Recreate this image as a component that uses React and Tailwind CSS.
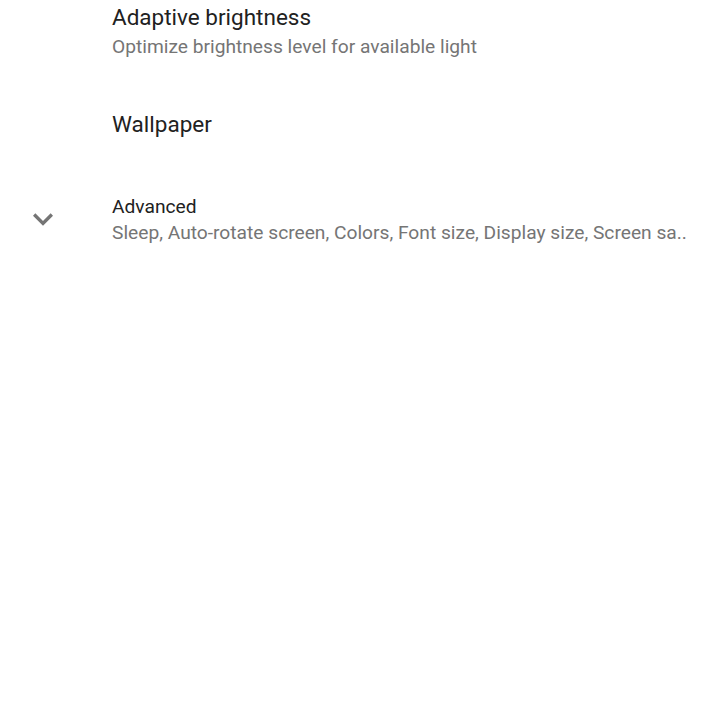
import React from "react";

function Chevron() {
  return (
    <svg width="40" height="40" viewBox="0 0 24 24" className="text-[#757575]">
      <path d="M7.41 8.59 12 13.17l4.59-4.58L18 10l-6 6-6-6 1.41-1.41z" fill="currentColor" />
    </svg>
  );
}

export default function App() {
  return (
    <div className="w-[720px] h-[720px] bg-white overflow-hidden" style={{ fontFamily: "Roboto, sans-serif" }}>
      <div className="pl-[112px] pt-[2px]">
        <div className="text-[22.5px] leading-[30px] text-[#212121]">Adaptive brightness</div>
        <div className="text-[19.2px] leading-[30px] text-[#757575]">Optimize brightness level for available light</div>
      </div>
      <div className="pl-[112px] mt-[47px]">
        <div className="text-[22.5px] leading-[30px] text-[#212121]">Wallpaper</div>
      </div>
      <div className="flex items-start mt-[55px]">
        <div className="w-[112px] flex justify-start pl-[23px] mt-[5px]">
          <Chevron />
        </div>
        <div className="flex flex-col">
          <div className="text-[19.2px] leading-[26px] text-[#212121]">Advanced</div>
          <div className="text-[19.2px] leading-[26px] text-[#757575] whitespace-nowrap">
            Sleep, Auto-rotate screen, Colors, Font size, Display size, Screen sa..
          </div>
        </div>
      </div>
    </div>
  );
}
